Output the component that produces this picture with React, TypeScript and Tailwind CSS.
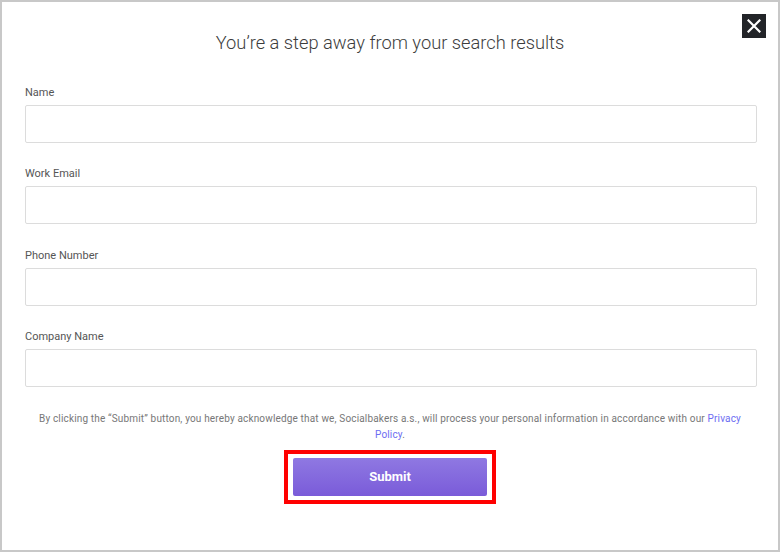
import React from 'react';

const fields = ['Name', 'Work Email', 'Phone Number', 'Company Name'];

export default function App() {
  return (
    <div
      className="w-[780px] h-[552px] bg-white border-2 border-[#c8c8c8] relative flex flex-col"
      style={{ fontFamily: 'Roboto, "Liberation Sans", sans-serif' }}
    >
      <button className="absolute top-[12px] right-[12px] w-[24px] h-[24px] bg-[#222428] flex items-center justify-center">
        <svg width="14" height="14" viewBox="0 0 14 14">
          <path d="M1.5 1.5 L12.5 12.5 M12.5 1.5 L1.5 12.5" stroke="#fff" strokeWidth="2.2" strokeLinecap="square" />
        </svg>
      </button>

      <h1 className="mt-[29px] text-center text-[18.3px] font-light text-[#3c3c3c] leading-[24px]">
        You’re a step away from your search results
      </h1>

      <form className="mt-[31px] pl-[23px] pr-[21px] flex flex-col gap-[24.3px]">
        {fields.map((f) => (
          <div key={f} className="flex flex-col">
            <label className="text-[11px] text-[#555] leading-[14px] mb-[5px]">{f}</label>
            <input className="h-[38px] border border-[#dcdcdc] rounded-[2px] outline-none" />
          </div>
        ))}
      </form>

      <p className="mt-[24px] px-[28px] text-center text-[10px] leading-[16px] text-[#777] tracking-[0.16px]">
        By clicking the “Submit” button, you hereby acknowledge that we, Socialbakers a.s., will process your personal
        information in accordance with our <a className="text-[#6d6df2]">Privacy</a>{' '}
        <a className="text-[#6d6df2]">Policy</a>.
      </p>

      <div className="mt-[7px] flex justify-center">
        <div className="border-[4px] border-[#ff0000] px-[5px] py-[4px]">
          <button className="w-[194px] h-[38px] rounded-[2px] bg-gradient-to-b from-[#8f78e2] to-[#7a5bd9] text-white text-[13px] font-bold">
            Submit
          </button>
        </div>
      </div>
    </div>
  );
}
